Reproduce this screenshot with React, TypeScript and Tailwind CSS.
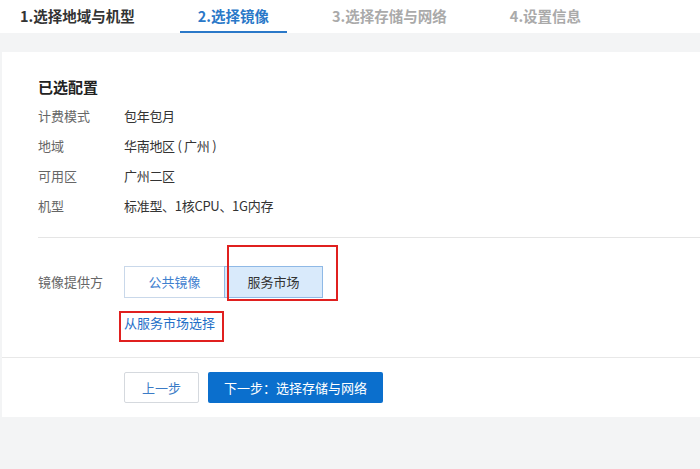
import React from "react";

const TABS = [
  { label: "1.选择地域与机型", state: "done" },
  { label: "2.选择镜像", state: "active" },
  { label: "3.选择存储与网络", state: "todo" },
  { label: "4.设置信息", state: "todo" },
];

const CONFIG = [
  { k: "计费模式", v: "包年包月" },
  { k: "地域", v: "华南地区 ( 广州 )" },
  { k: "可用区", v: "广州二区" },
  { k: "机型", v: "标准型、1核CPU、1G内存" },
];

export default function App() {
  return (
    <div
      className="w-[700px] h-[469px] bg-[#f3f4f5] overflow-hidden"
      style={{ fontFamily: '"Microsoft YaHei", "Noto Sans CJK SC", "Noto Sans", sans-serif' }}
    >
      {/* Step tabs */}
      <div className="h-[33px] bg-white flex pl-[2px] gap-[27px]">
        {TABS.map((t) => (
          <div
            key={t.label}
            className={`px-[18px] flex items-center text-[14.5px] font-bold border-b-2 ${
              t.state === "active"
                ? "text-[#2a78c8] border-[#2a78c8]"
                : t.state === "done"
                ? "text-[#333] border-transparent"
                : "text-[#aaa] border-transparent"
            }`}
          >
            {t.label}
          </div>
        ))}
      </div>

      <div className="h-[19px]" />

      {/* Card */}
      <div className="ml-[2px] bg-white">
        <div className="pl-[36px] pt-[25px]">
          <div className="h-[20px] leading-[20px] text-[15px] font-bold text-[#222]">已选配置</div>
          <div className="mt-[4px]">
            {CONFIG.map((r) => (
              <div key={r.k} className="h-[30px] flex items-center text-[13px]">
                <span className="w-[86px] text-[#666]">{r.k}</span>
                <span className="text-[#333] tracking-[-0.3px]">{r.v}</span>
              </div>
            ))}
          </div>
          <div className="mt-[16px] h-px bg-[#e5e5e5]" />
        </div>

        <div className="relative pl-[36px] pt-[28px] pb-[24px]">
          <div className="flex items-center">
            <span className="w-[86px] text-[13px] text-[#666]">镜像提供方</span>
            <div className="flex">
              <button className="w-[101px] h-[32px] border border-[#c9d8ea] bg-white text-[13px] text-[#3f80cf]">
                公共镜像
              </button>
              <button className="w-[99px] h-[32px] border border-[#8fb9e6] -ml-px bg-[#d9eafb] text-[13px] text-[#333]">
                服务市场
              </button>
            </div>
          </div>
          <div className="ml-[86px] mt-[15px] h-[20px] leading-[20px] text-[13px] text-[#1f6fc7]">
            从服务市场选择
          </div>

          <div className="absolute left-[225px] top-[7px] w-[111px] h-[56px] border-2 border-[#e0201f]" />
          <div className="absolute left-[117px] top-[73px] w-[105px] h-[31px] border-2 border-[#e0201f]" />
        </div>

        <div className="h-px bg-[#e8e8e8]" />

        <div className="pl-[122px] pt-[14px] pb-[14px] flex gap-[9px]">
          <button className="w-[75px] h-[31px] border border-[#d5d9de] rounded-[2px] bg-white text-[13px] text-[#3b7bc6]">
            上一步
          </button>
          <button className="w-[175px] h-[31px] rounded-[2px] bg-[#0b6fcd] text-[13px] text-white">
            下一步：选择存储与网络
          </button>
        </div>
      </div>
    </div>
  );
}
